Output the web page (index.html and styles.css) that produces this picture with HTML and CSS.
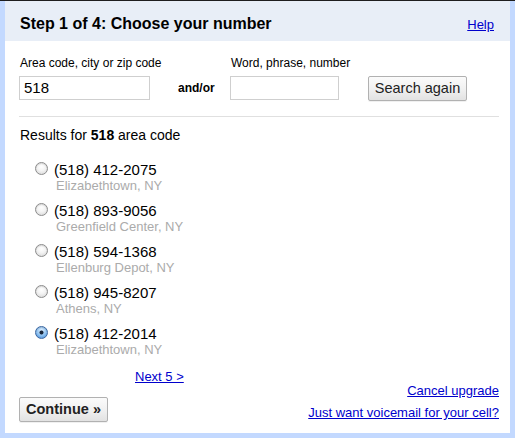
FILE: index.html
```html
<!DOCTYPE html>
<html>
<head>
<meta charset="utf-8">
<link rel="stylesheet" href="styles.css">
</head>
<body>
<div class="panel">
  <div class="header">
    <h1 class="title">Step 1 of 4: Choose your number</h1>
    <a class="link" href="#">Help</a>
  </div>
  <div class="content">
    <div class="search">
      <div class="field field-area">
        <label class="label">Area code, city or zip code</label>
        <div class="input">518</div>
      </div>
      <div class="andor">and/or</div>
      <div class="field field-word">
        <label class="label">Word, phrase, number</label>
        <div class="input"></div>
      </div>
      <button class="btn btn-search">Search again</button>
    </div>
    <div class="sep"></div>
    <div class="results-title">Results for <b>518</b> area code</div>
    <ul class="results">
      <li class="item"><span class="radio"></span><div class="info"><div class="phone">(518) 412-2075</div><div class="city">Elizabethtown, NY</div></div></li>
      <li class="item"><span class="radio"></span><div class="info"><div class="phone">(518) 893-9056</div><div class="city">Greenfield Center, NY</div></div></li>
      <li class="item"><span class="radio"></span><div class="info"><div class="phone">(518) 594-1368</div><div class="city">Ellenburg Depot, NY</div></div></li>
      <li class="item"><span class="radio"></span><div class="info"><div class="phone">(518) 945-8207</div><div class="city">Athens, NY</div></div></li>
      <li class="item"><span class="radio checked"></span><div class="info"><div class="phone">(518) 412-2014</div><div class="city">Elizabethtown, NY</div></div></li>
    </ul>
    <div class="footer">
      <div class="footer-left">
        <a class="link next" href="#">Next 5 &gt;</a>
        <button class="btn btn-continue">Continue »</button>
      </div>
      <div class="footer-right">
        <a class="link" href="#">Cancel upgrade</a>
        <a class="link" href="#">Just want voicemail for your cell?</a>
      </div>
    </div>
  </div>
</div>
</body>
</html>
```
FILE: styles.css
```css
html, body {
  margin: 0;
  padding: 0;
}
body {
  background: #c3d9ff;
  border-top: 1px solid #1e1e1e;
  font-family: "Liberation Sans", Arial, sans-serif;
  color: #000;
}
.panel {
  margin: 0 5px;
  height: 432px;
  background: #fff;
  overflow: hidden;
}
.header {
  height: 40px;
  box-sizing: border-box;
  padding: 5px 16px 0 15px;
  background: #e8eef7;
  display: flex;
  justify-content: space-between;
  align-items: baseline;
}
.title {
  margin: 0;
  font-size: 16px;
  font-weight: bold;
  line-height: 35px;
}
.link {
  color: #0000cc;
  font-size: 13px;
  line-height: 15px;
  text-decoration: underline;
  white-space: nowrap;
}
.content {
  padding: 15px 11px 0 14px;
}
.search {
  display: flex;
  align-items: flex-end;
}
.field {
  display: flex;
  flex-direction: column;
}
.field-area { width: 131px; }
.field-word { width: 109px; }
.label {
  font-size: 12px;
  line-height: 15px;
  margin-bottom: 5px;
  padding-left: 1px;
  white-space: nowrap;
}
.input {
  height: 24px;
  box-sizing: border-box;
  border: 1px solid #cfcfcf;
  font-size: 15px;
  line-height: 22px;
  padding-left: 4px;
}
.andor {
  font-size: 12px;
  font-weight: bold;
  line-height: 15px;
  margin: 0 17px 4px 28px;
  width: 35px;
}
.btn {
  font-family: "Liberation Sans", Arial, sans-serif;
  border: 1px solid #b1b1b1;
  border-radius: 2px;
  background: linear-gradient(#fbfbfb, #f1f1f1 50%, #e2e2e2);
  color: #222;
  height: 25px;
  padding: 0;
  font-size: 14.5px;
  line-height: 23px;
  box-shadow: 0 1px 0 rgba(0,0,0,0.06);
}
.btn-search {
  width: 99px;
  margin-left: 29px;
  margin-bottom: -1px;
}
.sep {
  height: 1px;
  background: #e0e0e0;
  margin-top: 16px;
}
.results-title {
  font-size: 14px;
  line-height: 17px;
  margin-top: 10px;
  padding-left: 1px;
}
.results {
  list-style: none;
  margin: 17px 0 0;
  padding: 0 0 0 16px;
}
.item {
  display: flex;
  align-items: flex-start;
  margin-bottom: 9px;
}
.item:last-child { margin-bottom: 0; }
.radio {
  width: 13px;
  height: 13px;
  box-sizing: border-box;
  border-radius: 50%;
  border: 1px solid #8c8c8c;
  background: radial-gradient(circle at 50% 35%, #ffffff 0, #f3f3f3 45%, #d2d2d2 100%);
  box-shadow: inset 0 1px 1px rgba(0,0,0,0.12);
  margin: 1px 6px 0 0;
  flex: none;
}
.radio.checked {
  border-color: #3a66a0;
  background:
    radial-gradient(circle, #17253a 0, #17253a 1.6px, transparent 2.4px),
    radial-gradient(circle at 50% 30%, #dff0ff 0, #8cc0f0 55%, #3e83d2 100%);
}
.phone {
  font-size: 15px;
  line-height: 17px;
}
.city {
  font-size: 13px;
  line-height: 15px;
  color: #ababab;
  padding-left: 2px;
}
.footer {
  display: flex;
  justify-content: space-between;
  align-items: flex-end;
  margin-top: 12px;
}
.footer-left {
  display: flex;
  flex-direction: column;
  align-items: flex-start;
}
.next {
  margin-left: 116px;
}
.btn-continue {
  width: 89px;
  margin-top: 13px;
  font-weight: bold;
}
.footer-right {
  display: flex;
  flex-direction: column;
  align-items: flex-end;
  gap: 7px;
  padding-bottom: 2px;
}
```
